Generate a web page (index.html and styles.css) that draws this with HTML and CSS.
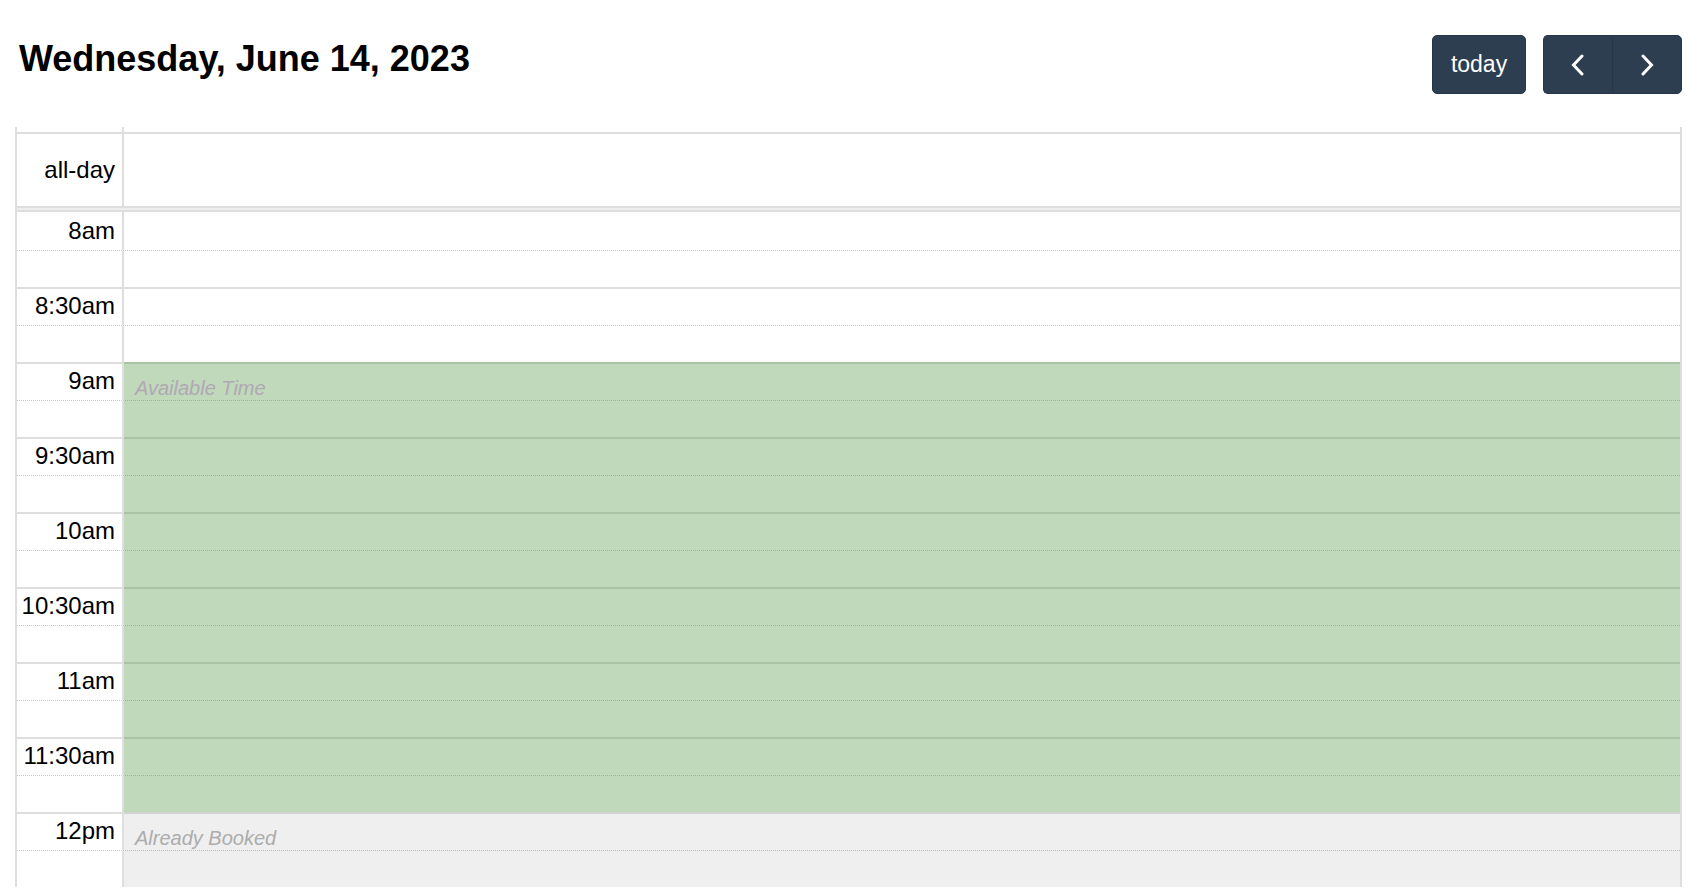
FILE: index.html
```html
<!DOCTYPE html>
<html lang="en">
<head>
<meta charset="utf-8">
<title>Calendar</title>
<link rel="stylesheet" href="styles.css">
</head>
<body>
<div class="page">
  <div class="toolbar">
    <h2 class="title">Wednesday, June 14, 2023</h2>
    <div class="actions">
      <button class="btn btn-today" type="button">today</button>
      <div class="btn-group">
        <button class="btn btn-icon btn-prev" type="button" aria-label="prev">
          <svg width="14" height="22" viewBox="0 0 14 22"><polyline points="11,2 2.5,11 11,20" fill="none" stroke="#fff" stroke-width="3" stroke-linecap="round" stroke-linejoin="miter"/></svg>
        </button>
        <button class="btn btn-icon btn-next" type="button" aria-label="next">
          <svg width="14" height="22" viewBox="0 0 14 22"><polyline points="3,2 11.5,11 3,20" fill="none" stroke="#fff" stroke-width="3" stroke-linecap="round" stroke-linejoin="miter"/></svg>
        </button>
      </div>
    </div>
  </div>

  <div class="cal">
    <div class="row cal-head"><div class="axis"></div><div class="col"></div></div>
    <div class="row allday"><div class="axis allday-label">all-day</div><div class="col"></div></div>
    <div class="divider"></div>
    <div class="slots">
      <div class="row slot first"><div class="axis"><span class="label">8am</span></div><div class="col"></div></div>
      <div class="row slot minor"><div class="axis"></div><div class="col"></div></div>
      <div class="row slot major"><div class="axis"><span class="label">8:30am</span></div><div class="col"></div></div>
      <div class="row slot minor"><div class="axis"></div><div class="col"></div></div>
      <div class="row slot major"><div class="axis"><span class="label">9am</span></div><div class="col"></div></div>
      <div class="row slot minor"><div class="axis"></div><div class="col"></div></div>
      <div class="row slot major"><div class="axis"><span class="label">9:30am</span></div><div class="col"></div></div>
      <div class="row slot minor"><div class="axis"></div><div class="col"></div></div>
      <div class="row slot major"><div class="axis"><span class="label">10am</span></div><div class="col"></div></div>
      <div class="row slot minor"><div class="axis"></div><div class="col"></div></div>
      <div class="row slot major"><div class="axis"><span class="label">10:30am</span></div><div class="col"></div></div>
      <div class="row slot minor"><div class="axis"></div><div class="col"></div></div>
      <div class="row slot major"><div class="axis"><span class="label">11am</span></div><div class="col"></div></div>
      <div class="row slot minor"><div class="axis"></div><div class="col"></div></div>
      <div class="row slot major"><div class="axis"><span class="label">11:30am</span></div><div class="col"></div></div>
      <div class="row slot minor"><div class="axis"></div><div class="col"></div></div>
      <div class="row slot major"><div class="axis"><span class="label">12pm</span></div><div class="col"></div></div>
      <div class="row slot minor"><div class="axis"></div><div class="col"></div></div>

      <div class="bg-event available" style="top:150px;height:450px"><span class="event-title">Available Time</span></div>
      <div class="bg-event booked" style="top:600px;height:75px"><span class="event-title">Already Booked</span></div>
    </div>
  </div>
</div>
</body>
</html>
```

FILE: styles.css
```css
* {
  box-sizing: border-box;
}

html, body {
  margin: 0;
  padding: 0;
  background: #fff;
  overflow: hidden;
}

body {
  font-family: "Liberation Sans", Arial, Helvetica, sans-serif;
  color: #000;
}

.page {
  padding: 35px 26px 0 15px;
}

.toolbar {
  display: flex;
  justify-content: space-between;
  align-items: flex-start;
  height: 59px;
}

.title {
  margin: 4px 0 0 4px;
  font-size: 36px;
  font-weight: 700;
  line-height: 40px;
  letter-spacing: 0;
}

.actions {
  display: flex;
  gap: 17px;
}

.btn {
  display: flex;
  align-items: center;
  justify-content: center;
  height: 59px;
  margin: 0;
  padding: 0 18px;
  border: 1px solid #26364a;
  border-radius: 5px;
  background: #2c3e50;
  color: #fff;
  font-family: "Liberation Sans", Arial, Helvetica, sans-serif;
  font-size: 23px;
  line-height: 1;
  cursor: pointer;
}

.btn-today {
  width: 94px;
}

.btn-group {
  display: flex;
}

.btn-icon {
  width: 70px;
  padding: 0;
}

.btn-prev {
  border-top-right-radius: 0;
  border-bottom-right-radius: 0;
  border-right-color: #263646;
}

.btn-next {
  margin-left: -1px;
  border-top-left-radius: 0;
  border-bottom-left-radius: 0;
}

.cal {
  margin-top: 33px;
  height: 760px;
  border-left: 2px solid #dedede;
  border-right: 2px solid #dedede;
  overflow: hidden;
}

.row {
  display: grid;
  grid-template-columns: 107px 1fr;
}

.axis {
  border-right: 2px solid #dedede;
  text-align: right;
  padding-right: 7px;
  font-size: 24px;
}

.cal-head {
  height: 7px;
  border-bottom: 2px solid #dedede;
}

.allday {
  height: 74px;
  border-bottom: 2px solid #dedede;
}

.allday-label {
  display: flex;
  align-items: center;
  justify-content: flex-end;
}

.divider {
  height: 4px;
  background: #eeeeee;
  border-bottom: 2px solid #dedede;
}

.slots {
  position: relative;
  height: 675px;
}

.slot {
  height: 37.5px;
}

.slot.major {
  border-top: 2px solid #dedede;
}

.slot.minor {
  border-top: 1px dotted #c8c8c8;
}

.slot .axis {
  padding-top: 4px;
}

.slot.first .axis {
  padding-top: 6px;
}

.label {
  display: block;
  line-height: 26px;
  white-space: nowrap;
}

.bg-event {
  position: absolute;
  left: 107px;
  right: 0;
  padding: 15px 11px;
}

.available {
  background: rgba(60, 140, 45, 0.33);
}

.booked {
  background: rgba(150, 150, 150, 0.15);
}

.event-title {
  display: block;
  font-size: 20px;
  font-style: italic;
  line-height: 23px;
}

.available .event-title {
  color: #b1a8b5;
}

.booked .event-title {
  color: #acacac;
}
```
